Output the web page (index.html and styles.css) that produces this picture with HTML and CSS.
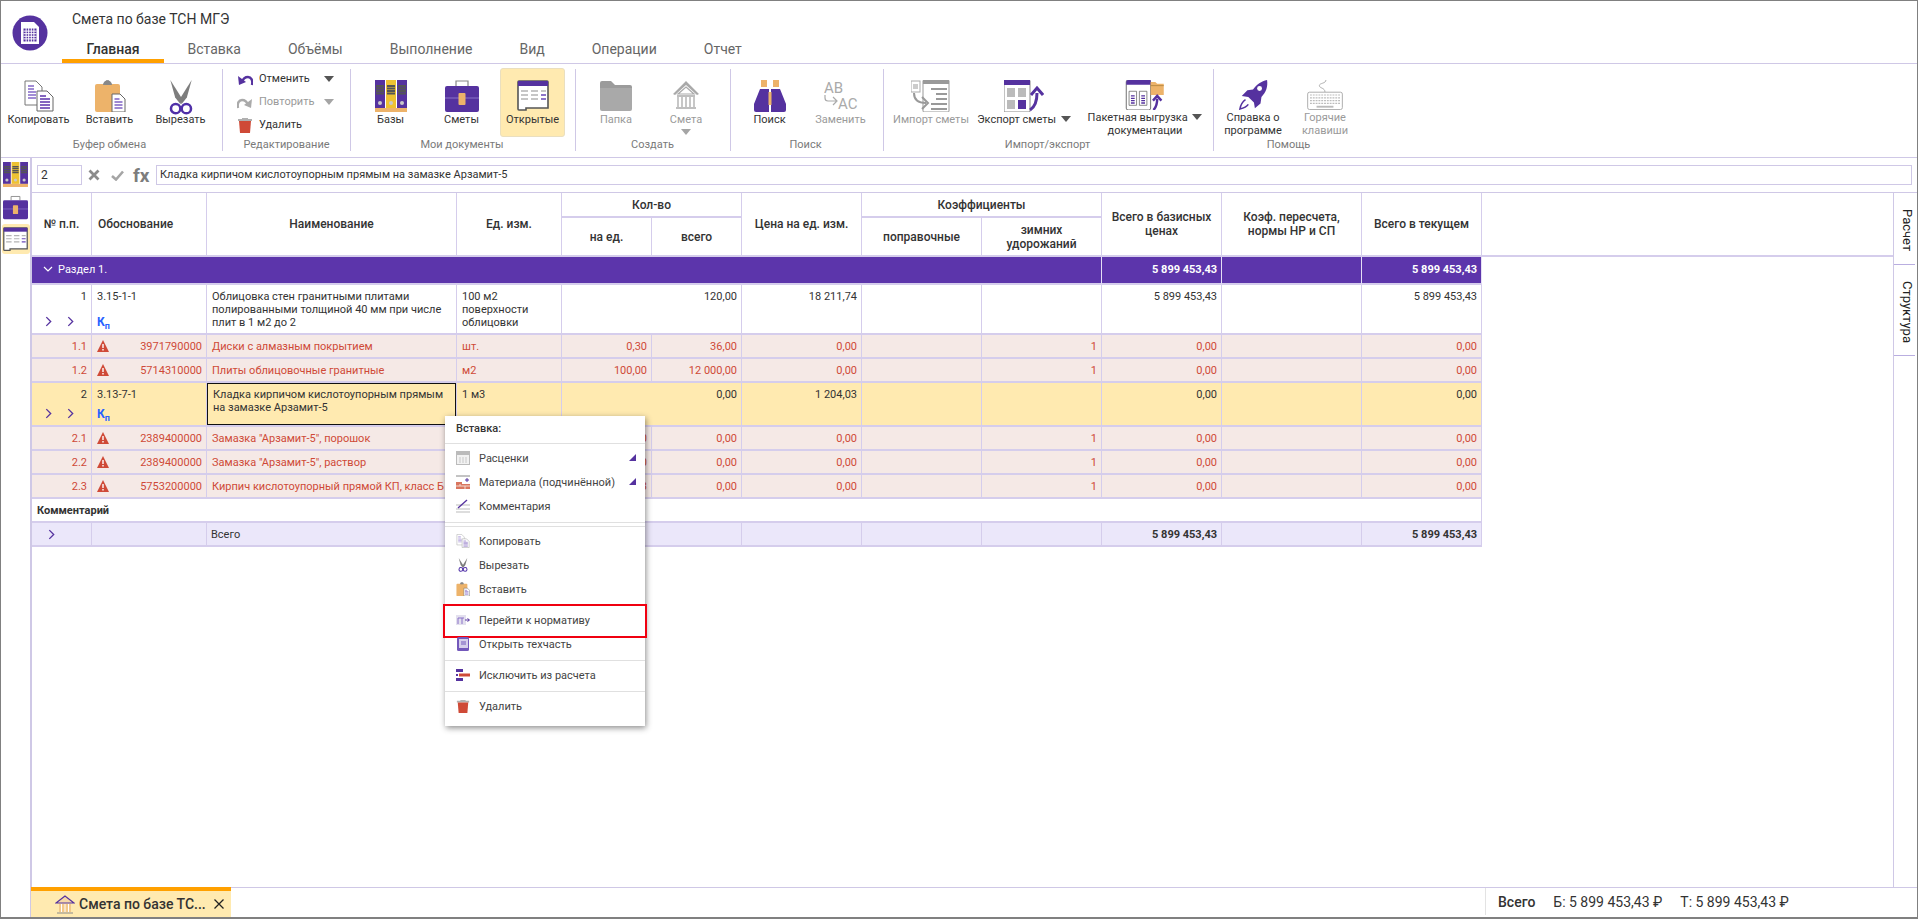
FILE: index.html
```html
<!DOCTYPE html>
<html lang="ru">
<head>
    <meta charset="UTF-8">
    <title>Смета по базе ТСН МГЭ</title>
    <link rel="stylesheet" href="styles.css">
</head>
<body>

<!-- icon set -->
<svg class="defs" xmlns="http://www.w3.org/2000/svg">
    <symbol id="i-logo" viewBox="0 0 36 36">
        <circle cx="18" cy="18" r="17.5" fill="#55329f"/>
        <path d="M9 7h13l5 5v17H9z" fill="#fff"/>
        <path d="M11.500 13.500h13v13h-13z" fill="#55329f"/>
        <path d="M14.100 13v14M16.700 13v14M19.300 13v14M21.900 13v14M11.500 16.100h13M11.500 18.700h13M11.500 21.300h13M11.500 23.900h13" stroke="#fff" stroke-width="1"/>
    </symbol>
    <symbol id="i-copy" viewBox="0 0 32 32">
        <path d="M2 1h11l6 6v18H2z" fill="#fff" stroke="#777"/>
        <path d="M5 6h6M5 9h6M5 12h8M5 15h8M5 18h8" stroke="#8468c8" stroke-width="1.500"/>
        <path d="M14 11h10l6 6v14H14z" fill="#fff" stroke="#666"/>
        <path d="M17 16h6M17 19h10M17 22h10M17 25h10M17 28h10" stroke="#5c35ab" stroke-width="1.500"/>
    </symbol>
    <symbol id="i-paste" viewBox="0 0 32 32">
        <rect x="1" y="4" width="25" height="28" rx="2" fill="#edb36a"/>
        <path d="M9 5a4.500 4.500 0 0 1 9 0z" fill="#888"/>
        <circle cx="13.500" cy="2.500" r="2" fill="none" stroke="#888"/>
        <path d="M18 14h8l5 5v13H18z" fill="#fff" stroke="#666"/>
        <path d="M20.500 19h5M20.500 22h8M20.500 25h8M20.500 28h8" stroke="#7f62c4" stroke-width="1.500"/>
    </symbol>
    <symbol id="i-cut" viewBox="0 0 24 36">
        <path d="M1 0l12 19-1.500 6L6 18z" fill="#7d7d7d"/>
        <path d="M23 0L11 19l1.500 6L18 18z" fill="#7d7d7d"/>
        <circle cx="6.500" cy="29.500" r="4.800" fill="none" stroke="#5030a8" stroke-width="2.600"/>
        <circle cx="17.500" cy="29.500" r="4.800" fill="none" stroke="#5030a8" stroke-width="2.600"/>
    </symbol>
    <symbol id="i-books" viewBox="0 0 32 32">
        <rect x="0" y="0" width="10" height="28" fill="#55329f"/>
        <rect x="11" y="0" width="10" height="28" fill="#eec232"/>
        <rect x="22" y="0" width="10" height="28" fill="#55329f"/>
        <path d="M1 6h8M1 8.500h8M1 11h8M1 13.500h8M12 6h8M12 8.500h8M12 11h8M12 13.500h8M23 6h8M23 8.500h8M23 11h8M23 13.500h8" stroke="#555" stroke-width="1.800"/>
        <circle cx="5" cy="23" r="2" fill="#c9c9c9"/>
        <circle cx="16" cy="23" r="2" fill="#c9c9c9"/>
        <circle cx="27" cy="23" r="2" fill="#c9c9c9"/>
        <rect x="0" y="28" width="32" height="4" fill="#edb36a"/>
    </symbol>
    <symbol id="i-case" viewBox="0 0 34 32">
        <path d="M11 6V1h12v5" fill="none" stroke="#888" stroke-width="1.200"/>
        <rect x="0" y="6" width="34" height="26" rx="2" fill="#55329f"/>
        <path d="M0 18h34" stroke="#8a72c8" stroke-width="1"/>
        <rect x="13.500" y="13" width="7" height="12" rx="1" fill="#edb36a"/>
    </symbol>
    <symbol id="i-open" viewBox="0 0 32 32">
        <path d="M1 2a1 1 0 0 1 1-1h28a1 1 0 0 1 1 1v26h-22v2H2a1 1 0 0 1-1-1z" fill="#fff" stroke="#555" stroke-width="1.600"/>
        <path d="M1 1h30v5H1z" fill="#55329f"/>
        <path d="M4 11h7M14 11h7M24 11h5M4 15h7M14 15h7M4 19h7M14 19h7" stroke="#b4b4b4" stroke-width="1.500"/>
        <path d="M24 15h5M24 19h5" stroke="#6a48b8" stroke-width="1.500"/>
    </symbol>
    <symbol id="i-folder" viewBox="0 0 32 32">
        <path d="M0 3a2 2 0 0 1 2-2h9l4 4h15a2 2 0 0 1 2 2v2H0z" fill="#9b9b9b"/>
        <path d="M0 8h32v21a2 2 0 0 1-2 2H2a2 2 0 0 1-2-2z" fill="#a9a9a9"/>
    </symbol>
    <symbol id="i-bank" viewBox="0 0 32 32">
        <path d="M16 1L3 14l2 1L16 5l11 10 2-1z" fill="#a9a9a9"/>
        <path d="M16 7l8 7H8z" fill="none" stroke="#aaa" stroke-width="1.200"/>
        <path d="M7 16h18M8 17v10M12 17v10M16 17v10M20 17v10M24 17v10M6 28h20" fill="none" stroke="#aaa" stroke-width="1.300"/>
    </symbol>
    <symbol id="i-binoc" viewBox="0 0 32 32">
        <rect x="7" y="0" width="6" height="7" fill="#edb36a"/>
        <rect x="19" y="0" width="6" height="7" fill="#edb36a"/>
        <path d="M6 9h9v23H2a2 2 0 0 1-2-2V24z" fill="#55329f"/>
        <path d="M26 9h-9v23h13a2 2 0 0 0 2-2V24z" fill="#55329f"/>
        <rect x="14.500" y="12" width="3" height="13" fill="#edb36a"/>
    </symbol>
    <symbol id="i-import" viewBox="0 0 40 32">
        <rect x="0" y="1" width="9" height="11" fill="#fff" stroke="#aaa"/>
        <rect x="2" y="4" width="5" height="5" fill="#ccc"/>
        <rect x="12" y="0" width="26" height="32" rx="1" fill="#fff" stroke="#999"/>
        <path d="M12 0h26v4H12z" fill="#999"/>
        <path d="M20 9h16M25 14h11M25 19h11M20 24h16M20 29h16" stroke="#999" stroke-width="2"/>
        <path d="M3 13c0 7 4 10 12 10M11 17l6 6-6 6" fill="none" stroke="#999" stroke-width="2"/>
    </symbol>
    <symbol id="i-export" viewBox="0 0 40 32">
        <rect x="0" y="0" width="26" height="32" rx="1" fill="#fff" stroke="#888"/>
        <path d="M0 0h26v5H0z" fill="#55329f"/>
        <rect x="3" y="8" width="8" height="9" fill="#bbb"/>
        <rect x="14" y="8" width="8" height="9" fill="#bbb"/>
        <rect x="3" y="20" width="8" height="9" fill="#bbb"/>
        <rect x="14" y="20" width="8" height="9" fill="#55329f"/>
        <path d="M26 30c5-3 7-8 7-17" fill="none" stroke="#55329f" stroke-width="3"/>
        <path d="M27 15l6-7 6 7" fill="none" stroke="#55329f" stroke-width="3"/>
    </symbol>
    <symbol id="i-batch" viewBox="0 0 40 32">
        <rect x="0" y="0" width="26" height="32" rx="2" fill="#fff" stroke="#666"/>
        <path d="M0 2a2 2 0 0 1 2-2h24v5H0z" fill="#55329f"/>
        <path d="M3 12h8v15H3zM14 12h8v15h-8z" fill="#fff" stroke="#666" stroke-width=".8"/>
        <path d="M5 17h4M5 19.500h4M5 22h4M5 24.500h4M16 17h4M16 19.500h4M16 22h4M16 24.500h4" stroke="#55329f" stroke-width="1.400"/>
        <path d="M26 2h5l2 2h7v12H26z" fill="#edb36a"/>
        <path d="M26 6h14" stroke="#b88a42"/>
        <path d="M29 32c3-3 4-6 4-12" fill="none" stroke="#55329f" stroke-width="2.600"/>
        <path d="M28.500 22l4.500-5 4.500 5" fill="none" stroke="#55329f" stroke-width="2.600"/>
    </symbol>
    <symbol id="i-rocket" viewBox="0 0 32 32">
        <path d="M31 0c1 7-1 13-6 18l-1 7-6 5-1-6-6-6-7-1 6-6 6-1C20 5 25 1 31 0z" fill="#55329f"/>
        <circle cx="23" cy="9" r="2.600" fill="#fff"/>
        <path d="M8 21c-3 2-5 5-6 10 4-1 7-2 9-5" fill="none" stroke="#55329f" stroke-width="1.600"/>
    </symbol>
    <symbol id="i-keys" viewBox="0 0 38 32">
        <path d="M19 13c0-5-6-4-6-7s7-2 7-6" fill="none" stroke="#aaa"/>
        <rect x=".5" y="13" width="37" height="18.500" rx="2" fill="#fff" stroke="#aaa"/>
        <path d="M3 16h32M3 19h32M3 22h32M3 25h32" stroke="#bbb" stroke-width="1.300" stroke-dasharray="2 1"/>
        <path d="M10 28.500h18" stroke="#bbb" stroke-width="2"/>
    </symbol>
    <symbol id="i-undo" viewBox="0 0 16 14">
        <path d="M15 13c1-5-1-8-4-8-3 0-5 2-6 5" fill="none" stroke="#55329f" stroke-width="2.400"/>
        <path d="M1 4l1 9 7-3z" fill="#55329f"/>
    </symbol>
    <symbol id="i-redo" viewBox="0 0 16 14">
        <path d="M1 13c-1-5 1-8 4-8 3 0 5 2 6 5" fill="none" stroke="#aaa" stroke-width="2.400"/>
        <path d="M15 4l-1 9-7-3z" fill="#aaa"/>
    </symbol>
    <symbol id="i-trash" viewBox="0 0 14 16">
        <path d="M4 1h6v1h4v2H0V2h4z" fill="#b0b0b0"/>
        <path d="M1 4h12l-1 12H2z" fill="#cf4a37"/>
    </symbol>
    <symbol id="i-warn" viewBox="0 0 12 12">
        <path d="M6 0l6 12H0z" fill="#cf4a37"/>
        <path d="M6 4v4M6 9v1.500" stroke="#fff" stroke-width="1.400"/>
    </symbol>
    <symbol id="i-rates" viewBox="0 0 14 14">
        <rect x=".5" y=".5" width="13" height="13" fill="#f2f2f2" stroke="#bbb"/>
        <path d="M1 1h12v3H1z" fill="#bbb"/>
        <path d="M3 7h8M3 9h8M3 11h8" stroke="#c8c8c8" stroke-dasharray="2 1"/>
    </symbol>
    <symbol id="i-mat" viewBox="0 0 14 14">
        <path d="M0 1h14" stroke="#888"/>
        <path d="M0 7h6v2h8v5H0z" fill="#d9765f"/>
        <path d="M0 11h14M4 9v2M9 11v3" stroke="#f3d9d0"/>
        <path d="M9 5h4M11 3v4" stroke="#55329f"/>
    </symbol>
    <symbol id="i-note" viewBox="0 0 14 14">
        <path d="M0 6h14M0 10h14M0 13h14" stroke="#bbb" stroke-width="1.200"/>
        <path d="M2 9L11 1" stroke="#55329f" stroke-width="1.300"/>
    </symbol>
    <symbol id="i-goto" viewBox="0 0 14 14">
        <rect x="0" y="2" width="10" height="10" fill="#e3e0ee"/>
        <path d="M2 5h6M2 5v6M6 5v6" stroke="#8a72c8" fill="none"/>
        <path d="M9 7h4M11.500 5.500L13.500 7l-2 1.500" stroke="#55329f" fill="none"/>
    </symbol>
    <symbol id="i-book" viewBox="0 0 14 14">
        <rect x="1" y="0" width="12" height="14" rx="1.500" fill="#7358bb"/>
        <rect x="3" y="2" width="9" height="9" fill="#d6cfeb"/>
        <path d="M5 5h5M5 7h5" stroke="#7358bb"/>
    </symbol>
    <symbol id="i-excl" viewBox="0 0 14 14">
        <path d="M0 1h7v3H0zM0 10h7v3H0z" fill="#55329f"/>
        <path d="M3 5.500h11v3H3z" fill="#cf4a37"/>
        <path d="M0 7h2" stroke="#55329f" stroke-width="2"/>
    </symbol>
</svg>

<div class="app">
    <header class="top">
        <svg class="logo"><use href="#i-logo"/></svg>
        <div class="top-right">
            <div class="doc-title">Смета по базе ТСН МГЭ</div>
            <nav class="tabs">
                <a class="tab active">Главная</a>
                <a class="tab">Вставка</a>
                <a class="tab">Объёмы</a>
                <a class="tab">Выполнение</a>
                <a class="tab">Вид</a>
                <a class="tab">Операции</a>
                <a class="tab">Отчет</a>
            </nav>
        </div>
    </header>

    <section class="ribbon">
        <div class="group g-clip">
            <div class="group-items">
                <div class="rb w71"><svg class="ic"><use href="#i-copy"/></svg><span>Копировать</span></div>
                <div class="rb w71"><svg class="ic"><use href="#i-paste"/></svg><span>Вставить</span></div>
                <div class="rb w71"><svg class="ic ic-cut"><use href="#i-cut"/></svg><span>Вырезать</span></div>
            </div>
            <div class="group-name">Буфер обмена</div>
        </div>
        <div class="group g-edit">
            <div class="edit-list">
                <div class="edit-row"><svg class="ic-edit"><use href="#i-undo"/></svg><span class="edit-text">Отменить</span><i class="caret"></i></div>
                <div class="edit-row off"><svg class="ic-edit"><use href="#i-redo"/></svg><span class="edit-text">Повторить</span><i class="caret"></i></div>
                <div class="edit-row"><svg class="ic-edit"><use href="#i-trash"/></svg><span class="edit-text">Удалить</span></div>
            </div>
            <div class="group-name">Редактирование</div>
        </div>
        <div class="group g-docs">
            <div class="group-items">
                <div class="rb w71"><svg class="ic"><use href="#i-books"/></svg><span>Базы</span></div>
                <div class="rb w71"><svg class="ic ic-34"><use href="#i-case"/></svg><span>Сметы</span></div>
                <div class="rb w71 selected"><svg class="ic"><use href="#i-open"/></svg><span>Открытые</span></div>
            </div>
            <div class="group-name">Мои документы</div>
        </div>
        <div class="group g-new">
            <div class="group-items">
                <div class="rb w70 off"><svg class="ic"><use href="#i-folder"/></svg><span>Папка</span></div>
                <div class="rb w70 off"><svg class="ic"><use href="#i-bank"/></svg><span>Смета</span><i class="caret caret-below"></i></div>
            </div>
            <div class="group-name">Создать</div>
        </div>
        <div class="group g-find">
            <div class="group-items">
                <div class="rb w71"><svg class="ic"><use href="#i-binoc"/></svg><span>Поиск</span></div>
                <div class="rb w71 off">
                    <svg class="ic ic-34" viewBox="0 0 34 32">
                        <text x="0" y="13" class="svg-ab">AB</text>
                        <path d="M1 15v3a3 3 0 0 0 3 3h8M9 17l4 4-4 4" fill="none" stroke="#aaa" stroke-width="1.200"/>
                        <text x="14" y="29" class="svg-ab">AC</text>
                    </svg>
                    <span>Заменить</span>
                </div>
            </div>
            <div class="group-name">Поиск</div>
        </div>
        <div class="group g-io">
            <div class="group-items">
                <div class="rb w86 off"><svg class="ic ic-40"><use href="#i-import"/></svg><span>Импорт сметы</span></div>
                <div class="rb w100"><svg class="ic ic-40"><use href="#i-export"/></svg><span>Экспорт сметы <i class="caret caret-in"></i></span></div>
                <div class="rb w126"><svg class="ic ic-40"><use href="#i-batch"/></svg><span>Пакетная выгрузка <i class="caret caret-in"></i><br>документации</span></div>
            </div>
            <div class="group-name">Импорт/экспорт</div>
        </div>
        <div class="group g-help">
            <div class="group-items">
                <div class="rb w72"><svg class="ic"><use href="#i-rocket"/></svg><span>Справка о<br>программе</span></div>
                <div class="rb w72 off"><svg class="ic ic-38"><use href="#i-keys"/></svg><span>Горячие<br>клавиши</span></div>
            </div>
            <div class="group-name">Помощь</div>
        </div>
    </section>

    <div class="work">
        <aside class="side">
            <svg class="side-ic"><use href="#i-books"/></svg>
            <svg class="side-ic"><use href="#i-case"/></svg>
            <div class="side-sel"><svg class="side-ic"><use href="#i-open"/></svg></div>
        </aside>

        <main class="main">
            <div class="formula">
                <div class="f-cell">2</div>
                <svg class="f-x" viewBox="0 0 12 12"><path d="M1.500 1.500l9 9M10.500 1.500l-9 9" stroke="#8b8b8b" stroke-width="2.800"/></svg>
                <svg class="f-ok" viewBox="0 0 13 11"><path d="M1 6l4 3.500L12 1.500" fill="none" stroke="#a5a5a5" stroke-width="2.600"/></svg>
                <span class="f-fx">fx</span>
                <div class="f-text">Кладка кирпичом кислотоупорным прямым на замазке Арзамит-5</div>
            </div>

            <div class="sheet">
                <div class="sheet-table">
                    <table class="grid">
                        <colgroup>
                            <col class="c60"><col class="c115"><col class="c250"><col class="c105"><col class="c90"><col class="c90">
                            <col class="c120"><col class="c120"><col class="c120"><col class="c120"><col class="c140"><col class="c120"><col>
                        </colgroup>
                        <thead>
                            <tr class="h-top">
                                <th rowspan="2">№ п.п.</th>
                                <th rowspan="2" class="left">Обоснование</th>
                                <th rowspan="2">Наименование</th>
                                <th rowspan="2">Ед. изм.</th>
                                <th colspan="2">Кол-во</th>
                                <th rowspan="2">Цена на ед. изм.</th>
                                <th colspan="2">Коэффициенты</th>
                                <th rowspan="2">Всего в базисных<br>ценах</th>
                                <th rowspan="2">Коэф. пересчета,<br>нормы НР и СП</th>
                                <th rowspan="2">Всего в текущем</th>
                                <th rowspan="2" class="filler"></th>
                            </tr>
                            <tr class="h-sub">
                                <th>на ед.</th>
                                <th>всего</th>
                                <th>поправочные</th>
                                <th>зимних<br>удорожаний</th>
                            </tr>
                        </thead>
                        <tbody>
                            <tr class="r-section">
                                <td colspan="9"><svg class="sec-chev" viewBox="0 0 10 6"><path d="M1 1l4 4 4-4" fill="none" stroke="#fff" stroke-width="1.200"/></svg>Раздел 1.</td>
                                <td class="n b">5 899 453,43</td><td></td><td class="n b">5 899 453,43</td>
                            </tr>
                            <tr class="r-work r-tall">
                                <td><div class="n">1</div><div class="chevs"><svg class="chev" viewBox="0 0 6 10"><path d="M1 1l4 4-4 4" fill="none" stroke="#55329f" stroke-width="1.200"/></svg><svg class="chev" viewBox="0 0 6 10"><path d="M1 1l4 4-4 4" fill="none" stroke="#55329f" stroke-width="1.200"/></svg></div></td>
                                <td>3.15-1-1<div class="kp">К<sub>п</sub></div></td>
                                <td>Облицовка стен гранитными плитами полированными толщиной 40 мм при числе плит в 1 м2 до 2</td>
                                <td>100 м2 поверхности облицовки</td>
                                <td colspan="2" class="n">120,00</td><td class="n">18 211,74</td><td></td><td></td><td class="n">5 899 453,43</td><td></td><td class="n">5 899 453,43</td>
                            </tr>
                            <tr class="r-res">
                                <td class="n">1.1</td>
                                <td><div class="code"><svg class="warn"><use href="#i-warn"/></svg>3971790000</div></td>
                                <td>Диски с алмазным покрытием</td><td>шт.</td>
                                <td class="n">0,30</td><td class="n">36,00</td><td class="n">0,00</td><td></td><td class="n">1</td><td class="n">0,00</td><td></td><td class="n">0,00</td>
                            </tr>
                            <tr class="r-res">
                                <td class="n">1.2</td>
                                <td><div class="code"><svg class="warn"><use href="#i-warn"/></svg>5714310000</div></td>
                                <td>Плиты облицовочные гранитные</td><td>м2</td>
                                <td class="n">100,00</td><td class="n">12 000,00</td><td class="n">0,00</td><td></td><td class="n">1</td><td class="n">0,00</td><td></td><td class="n">0,00</td>
                            </tr>
                            <tr class="r-work r-cur">
                                <td><div class="n">2</div><div class="chevs"><svg class="chev" viewBox="0 0 6 10"><path d="M1 1l4 4-4 4" fill="none" stroke="#55329f" stroke-width="1.200"/></svg><svg class="chev" viewBox="0 0 6 10"><path d="M1 1l4 4-4 4" fill="none" stroke="#55329f" stroke-width="1.200"/></svg></div></td>
                                <td>3.13-7-1<div class="kp">К<sub>п</sub></div></td>
                                <td class="focus">Кладка кирпичом кислотоупорным прямым на замазке Арзамит-5</td>
                                <td>1 м3</td>
                                <td colspan="2" class="n">0,00</td><td class="n">1 204,03</td><td></td><td></td><td class="n">0,00</td><td></td><td class="n">0,00</td>
                            </tr>
                            <tr class="r-res">
                                <td class="n">2.1</td>
                                <td><div class="code"><svg class="warn"><use href="#i-warn"/></svg>2389400000</div></td>
                                <td>Замазка "Арзамит-5", порошок</td><td>кг</td>
                                <td class="n">1,00</td><td class="n">0,00</td><td class="n">0,00</td><td></td><td class="n">1</td><td class="n">0,00</td><td></td><td class="n">0,00</td>
                            </tr>
                            <tr class="r-res">
                                <td class="n">2.2</td>
                                <td><div class="code"><svg class="warn"><use href="#i-warn"/></svg>2389400000</div></td>
                                <td>Замазка "Арзамит-5", раствор</td><td>м3</td>
                                <td class="n">0,10</td><td class="n">0,00</td><td class="n">0,00</td><td></td><td class="n">1</td><td class="n">0,00</td><td></td><td class="n">0,00</td>
                            </tr>
                            <tr class="r-res">
                                <td class="n">2.3</td>
                                <td><div class="code"><svg class="warn"><use href="#i-warn"/></svg>5753200000</div></td>
                                <td class="clip">Кирпич кислотоупорный прямой КП, класс Б</td><td>шт</td>
                                <td class="n">3,13</td><td class="n">0,00</td><td class="n">0,00</td><td></td><td class="n">1</td><td class="n">0,00</td><td></td><td class="n">0,00</td>
                            </tr>
                            <tr class="r-comment"><td colspan="12">Комментарий</td></tr>
                            <tr class="r-total">
                                <td><svg class="chev chev-one" viewBox="0 0 6 10"><path d="M1 1l4 4-4 4" fill="none" stroke="#55329f" stroke-width="1.200"/></svg></td>
                                <td></td><td>Всего</td><td></td><td colspan="2"></td><td></td><td></td><td></td>
                                <td class="n b">5 899 453,43</td><td></td><td class="n b">5 899 453,43</td>
                            </tr>
                        </tbody>
                    </table>
                </div>
                <div class="side-tabs">
                    <div class="side-tab t-calc">Расчет</div>
                    <div class="side-tab t-struct">Структура</div>
                </div>
            </div>

            <footer class="status">
                <div class="doc-tab">
                    <svg class="doc-tab-ic" viewBox="0 0 20 19">
                        <path d="M10 1L1 8h18z" fill="#f6d9a8" stroke="#55329f" stroke-width="1.200"/>
                        <path d="M4 9h12v8H4z" fill="#f3c98a"/>
                        <path d="M6.500 9v8M10 9v8M13.500 9v8" stroke="#fff"/>
                        <path d="M2 18h16" stroke="#8a8a8a"/>
                    </svg>
                    <span class="doc-tab-name">Смета по базе ТС...</span>
                    <svg class="doc-tab-x" viewBox="0 0 10 10"><path d="M.5.500l9 9M9.500.500l-9 9" stroke="#222" stroke-width="1.300"/></svg>
                </div>
                <div class="sum">
                    <b>Всего</b>
                    <span>Б: 5 899 453,43 ₽</span>
                    <span>Т: 5 899 453,43 ₽</span>
                </div>
            </footer>
        </main>
    </div>

    <!-- context menu, lies over the grid -->
    <div class="menu">
        <div class="menu-head">Вставка:</div>
        <div class="menu-sec s-insert">
            <div class="mi"><svg class="mi-ic"><use href="#i-rates"/></svg>Расценки<i class="more"></i></div>
            <div class="mi"><svg class="mi-ic"><use href="#i-mat"/></svg>Материала (подчинённой)<i class="more"></i></div>
            <div class="mi"><svg class="mi-ic"><use href="#i-note"/></svg>Комментария</div>
        </div>
        <div class="menu-sec s-edit">
            <div class="mi"><svg class="mi-ic faded"><use href="#i-copy"/></svg>Копировать</div>
            <div class="mi"><svg class="mi-ic"><use href="#i-cut"/></svg>Вырезать</div>
            <div class="mi"><svg class="mi-ic"><use href="#i-paste"/></svg>Вставить</div>
            <div class="mi mark"><svg class="mi-ic"><use href="#i-goto"/></svg>Перейти к нормативу</div>
            <div class="mi"><svg class="mi-ic"><use href="#i-book"/></svg>Открыть техчасть</div>
        </div>
        <div class="menu-sec s-excl">
            <div class="mi"><svg class="mi-ic"><use href="#i-excl"/></svg>Исключить из расчета</div>
        </div>
        <div class="menu-sec s-del">
            <div class="mi"><svg class="mi-ic"><use href="#i-trash"/></svg>Удалить</div>
        </div>
    </div>
</div>

</body>
</html>
```

FILE: styles.css
```css
* {
    margin: 0;
    padding: 0;
    box-sizing: border-box;
}

body {
    font-family: Roboto, 'Liberation Sans', sans-serif;
    font-size: 11px;
    color: #333;
    background: #fff;
    overflow: hidden;
}

.defs {
    position: absolute;
    width: 0;
    height: 0;
}

.svg-ab {
    font-family: Roboto, sans-serif;
    font-size: 15px;
    fill: #aaa;
}

.app {
    position: relative;
    width: 1918px;
    height: 919px;
    border: 1px solid #808080;
    border-width: 1px 1px 2px 1px;
    display: flex;
    flex-direction: column;
}

/* title + tabs */
.top {
    height: 63px;
    border-bottom: 1px solid #cfc8e6;
    display: flex;
    flex: none;
}

.logo {
    width: 36px;
    height: 36px;
    margin: 14px 0 0 11px;
    flex: none;
}

.top-right {
    display: flex;
    flex-direction: column;
    margin-left: 14px;
}

.doc-title {
    font-size: 14px;
    line-height: 18px;
    margin: 9px 0 0 10px;
    color: #333;
}

.tabs {
    display: flex;
    margin-top: 7px;
}

.tab {
    font-size: 14px;
    line-height: 28px;
    height: 28px;
    padding: 0 23.5px;
    color: #666;
    border-bottom: 4px solid transparent;
}

.tab.active {
    font-weight: 500;
    color: #333;
    padding: 0 24.5px;
    border-bottom-color: #ffa000;
}

/* ribbon */
.ribbon {
    height: 94px;
    border-bottom: 1px solid #cfc8e6;
    padding-top: 5px;
    display: flex;
    flex: none;
}

.group {
    height: 82px;
    border-right: 1px solid #cfc8e6;
    display: flex;
    flex-direction: column;
    justify-content: space-between;
    flex: none;
}

.g-clip { width: 222px; padding-left: 2px; }
.g-edit { width: 128px; }
.g-docs { width: 225px; padding-left: 4px; }
.g-new { width: 155px; padding-left: 5px; }
.g-find { width: 153px; padding-left: 3px; }
.g-io { width: 330px; padding-left: 4px; }
.g-help { width: 152px; padding-left: 3px; border-right: none; }

.group-items {
    display: flex;
    height: 68px;
}

.group-name {
    text-align: center;
    color: #7a7a7a;
    font-size: 11px;
    line-height: 14px;
    margin-bottom: -1px;
}

.g-clip .group-name,
.g-docs .group-name,
.g-new .group-name,
.g-find .group-name,
.g-io .group-name,
.g-help .group-name {
    margin-left: -6px;
}

.rb {
    display: flex;
    flex-direction: column;
    align-items: center;
    padding-top: 11px;
    line-height: 13px;
    text-align: center;
    white-space: nowrap;
    flex: none;
}

.w70 { width: 70px; }
.w71 { width: 71px; }
.w72 { width: 72px; }
.w86 { width: 86px; }
.w100 { width: 100px; }
.w126 { width: 126px; margin-left: 8px; }

.rb span {
    margin-top: 1px;
}

.rb.off {
    color: #9a9a9a;
}

.rb.selected {
    width: 65px;
    height: 69px;
    margin: -1px 3px 0;
    background: #ffeab0;
    border: 1px solid #eadfbf;
    border-radius: 3px;
    padding-top: 11px;
}

.ic {
    width: 32px;
    height: 32px;
}

.ic-34 { width: 34px; }
.ic-38 { width: 38px; }
.ic-40 { width: 40px; }
.ic-cut { width: 24px; height: 35px; margin-bottom: -3px; }

.caret {
    display: inline-block;
    width: 0;
    height: 0;
    border-left: 5px solid transparent;
    border-right: 5px solid transparent;
    border-top: 6px solid #555;
}

.off .caret {
    border-top-color: #a5a5a5;
}

.caret-below {
    margin-top: 3px;
}

.caret-in {
    vertical-align: 1px;
    margin-left: 2px;
}

.edit-list {
    margin-top: -2px;
}

.edit-row {
    display: flex;
    align-items: center;
    height: 23px;
    padding-left: 14px;
}

.edit-row.off {
    color: #9a9a9a;
}

.ic-edit {
    width: 16px;
    height: 16px;
    flex: none;
}

.edit-text {
    width: 65px;
    margin-left: 6px;
}

/* work area */
.work {
    flex: 1;
    display: flex;
    min-height: 0;
}

.side {
    width: 31px;
    border-right: 2px solid #cfc8e6;
    flex: none;
    padding-top: 4px;
    display: flex;
    flex-direction: column;
    align-items: center;
}

.side-ic {
    width: 25px;
    height: 25px;
    margin-bottom: 8px;
    display: block;
    flex: none;
}

.side-sel {
    width: 28px;
    height: 30px;
    margin-top: -4px;
    padding-top: 3px;
    background: #ffeab0;
    border-radius: 3px;
    display: flex;
    justify-content: center;
}

.main {
    flex: 1;
    min-width: 0;
    display: flex;
    flex-direction: column;
}

.formula {
    height: 35px;
    flex: none;
    display: flex;
    align-items: center;
    padding: 0 5px 0 5px;
    border-bottom: 1px solid #cfc8e6;
}

.f-cell {
    width: 45px;
    height: 20px;
    border: 1px solid #cfc8e6;
    line-height: 18px;
    padding-left: 3px;
    font-size: 12px;
}

.f-x {
    width: 12px;
    height: 12px;
    margin-left: 6px;
}

.f-ok {
    width: 13px;
    height: 11px;
    margin-left: 11px;
}

.f-fx {
    font-size: 19px;
    font-weight: 700;
    color: #7d7d7d;
    margin-left: 9px;
    width: 23px;
}

.f-text {
    flex: 1;
    height: 20px;
    border: 1px solid #cfc8e6;
    line-height: 18px;
    padding-left: 3px;
    font-size: 11px;
}

.sheet {
    flex: 1;
    min-height: 0;
    display: flex;
}

.sheet-table {
    width: 1861px;
    flex: none;
}

.grid {
    width: 1861px;
    border-collapse: separate;
    border-spacing: 0;
    table-layout: fixed;
}

.c60 { width: 60px; }
.c90 { width: 90px; }
.c105 { width: 105px; }
.c115 { width: 115px; }
.c120 { width: 120px; }
.c140 { width: 140px; }
.c250 { width: 250px; }

.grid th {
    font-weight: 500;
    font-size: 12px;
    line-height: 14px;
    text-align: center;
    border-right: 1px solid #d5cdec;
    border-bottom: 2px solid #d5cdec;
}

.grid th.left {
    text-align: left;
    padding-left: 6px;
}

.grid th.filler {
    border-right: none;
}

.h-top th { height: 25px; }
.h-sub th { height: 39px; }

.grid td {
    border-right: 1px solid #d5cdec;
    border-bottom: 2px solid #d5cdec;
    padding: 0 4px;
    vertical-align: middle;
    line-height: 13px;
    overflow: hidden;
}

.grid td.n,
.n {
    text-align: right;
}

.grid td.b {
    font-weight: 700;
}

.r-section td {
    height: 28px;
    background: #5c35ab;
    color: #fff;
    border-right-color: #e5dff5;
    padding-bottom: 2px;
}

.r-section td:first-child {
    padding-left: 11px;
}

.sec-chev {
    width: 10px;
    height: 6px;
    margin-right: 5px;
    vertical-align: 1px;
}

.r-work td {
    vertical-align: top;
    padding-top: 5px;
}

.r-tall td { height: 50px; }
.r-cur td { height: 44px; background: #ffeab0; }

.r-tall .chevs { margin-top: 13px; }
.r-cur .chevs { margin-top: 7px; }

.r-work td:nth-child(2) { padding-left: 5px; }
.r-work td:nth-child(3),
.r-res td:nth-child(3) { padding-left: 5px; }
.r-work td:nth-child(4),
.r-res td:nth-child(4) { padding-left: 5px; }

.grid td.focus {
    box-shadow: inset 0 0 0 1px #111;
    padding-left: 6px;
}

.chevs {
    display: flex;
    gap: 15px;
    padding-left: 9px;
}

.chev {
    width: 7px;
    height: 11px;
    display: block;
}

.chev-one {
    margin-left: 12px;
}

.kp {
    color: #2962ff;
    font-weight: 700;
    font-size: 12px;
    margin-top: 13px;
}

.r-cur .kp { margin-top: 7px; }

.kp sub {
    font-size: 9px;
    line-height: 0;
}

.r-res td {
    height: 24px;
    background: #f5e9e6;
    color: #cf4a37;
}

.code {
    display: flex;
    align-items: center;
    justify-content: space-between;
    padding-left: 1px;
}

.warn {
    width: 12px;
    height: 12px;
    flex: none;
}

.clip {
    white-space: nowrap;
}

.r-comment td {
    height: 24px;
    font-weight: 700;
    padding-left: 5px;
}

.r-total td {
    height: 24px;
    background: #ebe7fa;
}

/* right tabs */
.side-tabs {
    flex: 1;
    border-left: 1px solid #cfc8e6;
}

.side-tab {
    writing-mode: vertical-rl;
    border-bottom: 1px solid #b9aee0;
    font-size: 13px;
    color: #222;
    display: flex;
    align-items: center;
    padding: 16px 0 0 6px;
}

.t-calc { height: 72px; }
.t-struct { height: 91px; }

/* bottom */
.status {
    height: 30px;
    flex: none;
    border-top: 1px solid #cfc8e6;
    display: flex;
    justify-content: space-between;
}

.doc-tab {
    width: 200px;
    background: #ffeab0;
    border-top: 4px solid #ffa000;
    display: flex;
    align-items: center;
    padding-left: 24px;
    margin: -1px 0 0 -1px;
}

.doc-tab-ic {
    width: 20px;
    height: 19px;
    flex: none;
}

.doc-tab-name {
    font-size: 14px;
    font-weight: 500;
    color: #333;
    margin-left: 4px;
    width: 135px;
    white-space: nowrap;
}

.doc-tab-x {
    width: 10px;
    height: 10px;
    flex: none;
}

.sum {
    width: 432px;
    border-left: 1px solid #e3e3e3;
    display: flex;
    align-items: center;
    font-size: 14px;
    padding-left: 12px;
    gap: 18px;
    margin-bottom: 2px;
}

.sum b {
    font-weight: 500;
}

/* context menu */
.menu {
    position: absolute;
    left: 444px;
    top: 415px;
    width: 200px;
    height: 310px;
    background: #fff;
    box-shadow: 1px 2px 6px rgba(0, 0, 0, 0.45);
    font-size: 11px;
}

.menu-head {
    height: 28px;
    line-height: 26px;
    padding-left: 11px;
    font-weight: 500;
    border-bottom: 1px solid #e0e0e0;
}

.menu-sec {
    border-bottom: 1px solid #e0e0e0;
}

.s-insert { padding: 2px 0 4px; position: relative; }
.s-insert::after {
    content: "";
    position: absolute;
    left: 0;
    right: 0;
    bottom: -5px;
    border-bottom: 1px solid #e0e0e0;
}
.s-edit { padding: 6px 0 4px; }
.s-excl { padding: 2px 0 4px; }
.s-del { padding-top: 2px; border-bottom: none; }

.mi {
    height: 24px;
    display: flex;
    align-items: center;
    position: relative;
    padding-left: 34px;
    color: #444;
}

.mi-ic {
    position: absolute;
    left: 11px;
    top: 5px;
    width: 14px;
    height: 14px;
}

.faded {
    opacity: 0.7;
}

.more {
    position: absolute;
    right: 9px;
    top: 8px;
    width: 0;
    height: 0;
    border-left: 7px solid transparent;
    border-bottom: 7px solid #55329f;
}

.mark {
    margin-top: 7px;
}

.mark::after {
    content: "";
    position: absolute;
    left: -2px;
    right: -2px;
    top: -4px;
    bottom: -6px;
    border: 2px solid #f00010;
}
```
